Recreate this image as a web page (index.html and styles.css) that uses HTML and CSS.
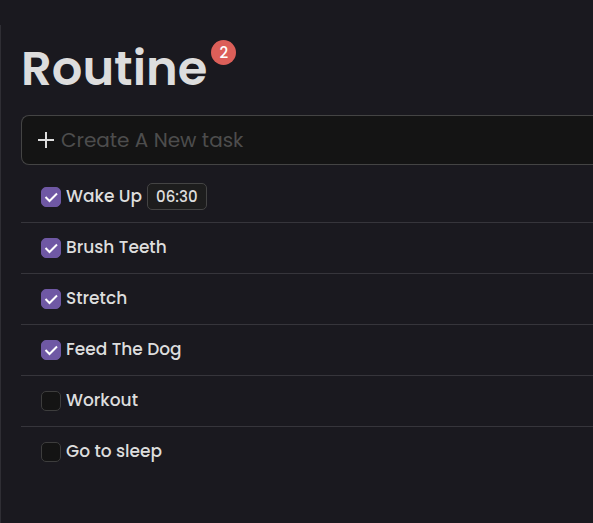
FILE: index.html
```html
<!DOCTYPE html>
<html lang="en">
<head>
<meta charset="utf-8">
<meta name="viewport" content="width=device-width, initial-scale=1">
<title>Routine</title>
<link rel="stylesheet" href="styles.css">
</head>
<body>
<main class="panel">
  <header class="header">
    <h1 class="title">Routine</h1>
    <span class="badge">2</span>
  </header>
  <form class="create">
    <svg class="plus" viewBox="0 0 16 16" aria-hidden="true"><path d="M8 0v16M0 8h16"/></svg>
    <input class="create-input" type="text" placeholder="Create A New task" aria-label="Create A New task">
  </form>
  <ul class="tasks">
    <li class="task"><input class="check" type="checkbox" id="t1" checked><label class="label" for="t1">Wake Up</label><time class="time">06:30</time></li>
    <li class="task"><input class="check" type="checkbox" id="t2" checked><label class="label" for="t2">Brush Teeth</label></li>
    <li class="task"><input class="check" type="checkbox" id="t3" checked><label class="label" for="t3">Stretch</label></li>
    <li class="task"><input class="check" type="checkbox" id="t4" checked><label class="label" for="t4">Feed The Dog</label></li>
    <li class="task"><input class="check" type="checkbox" id="t5"><label class="label" for="t5">Workout</label></li>
    <li class="task"><input class="check" type="checkbox" id="t6"><label class="label" for="t6">Go to sleep</label></li>
  </ul>
</main>
</body>
</html>
```
FILE: styles.css
```css
* {
  box-sizing: border-box;
}

body {
  margin: 0;
  padding-top: 25px;
  min-height: 100vh;
  display: flex;
  flex-direction: column;
  background: #1a191f;
  color: #dddddd;
  font-family: Poppins, Inter, sans-serif;
}

.panel {
  flex: 1;
  padding: 15px 0 20px 20px;
  border-left: 1px solid #2f2e34;
}

.header {
  display: flex;
  align-items: flex-start;
  gap: 4px;
  margin-bottom: 17px;
}

.title {
  margin: 0;
  font-size: 48px;
  font-weight: 600;
  line-height: 58px;
}

.badge {
  width: 25px;
  height: 25px;
  border-radius: 50%;
  background: #dc5f59;
  color: #ffffff;
  font-size: 15px;
  font-weight: 500;
  line-height: 25px;
  text-align: center;
}

.create {
  display: flex;
  align-items: center;
  gap: 7px;
  height: 50px;
  padding-left: 16px;
  background: #141414;
  border: 1px solid #444444;
  border-right: 0;
  border-radius: 8px 0 0 8px;
}

.plus {
  width: 16px;
  height: 16px;
  flex: none;
  fill: none;
  stroke: #dddddd;
  stroke-width: 2;
}

.create-input {
  flex: 1;
  min-width: 0;
  padding: 0;
  border: 0;
  outline: 0;
  background: transparent;
  color: #dddddd;
  font: inherit;
  font-size: 20px;
}

.create-input::placeholder {
  color: #4d4d4d;
  opacity: 1;
}

.tasks {
  list-style: none;
  margin: 6px 0 0;
  padding: 0;
}

.task {
  display: flex;
  align-items: center;
  gap: 5px;
  height: 51px;
  padding-left: 20px;
  font-size: 17px;
  font-weight: 500;
}

.task + .task {
  border-top: 1px solid #36353b;
}

.label {
  padding-bottom: 2px;
}

.check {
  appearance: none;
  flex: none;
  width: 20px;
  height: 20px;
  margin: 0;
  border: 1px solid #3d3d3d;
  border-radius: 5px;
  background: #141414;
}

.check:checked {
  border-color: #6f58a4;
  background: #6f58a4 url("data:image/svg+xml,%3Csvg xmlns='http://www.w3.org/2000/svg' viewBox='0 0 18 18'%3E%3Cpath d='M3.5 9l4 4 7.5-7.5' fill='none' stroke='white' stroke-width='2'/%3E%3C/svg%3E") center / 18px 18px no-repeat;
}

.time {
  padding: 0 8px;
  border: 1px solid #444444;
  border-radius: 5px;
  background: #1d1d1d;
  font-size: 15px;
  line-height: 25px;
}
```
